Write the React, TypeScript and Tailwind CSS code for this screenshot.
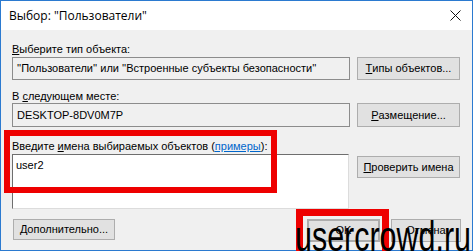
import React from "react";

const font = { fontFamily: '"Liberation Sans", Arial, sans-serif' };

function Btn({ children, className = "" }: { children: React.ReactNode; className?: string }) {
  return (
    <div
      className={
        "flex items-center justify-center bg-[#e1e1e1] border border-[#adadad] text-[11px] text-black leading-none " +
        className
      }
    >
      {children}
    </div>
  );
}

export default function App() {
  return (
    <div className="relative w-[473px] h-[251px] overflow-hidden bg-white" style={font}>
      <div className="w-[473px] h-[251px] border border-[#2b7ad0] flex flex-col bg-[#f0f0f0]">
        {/* title bar */}
        <div className="h-[29px] shrink-0 bg-white flex items-center justify-between pl-[8px] pr-[10px]">
          <span className="text-[12px] text-black" style={{ fontFamily: '"Open Sans", "Noto Sans", sans-serif' }}>
            Выбор: "Пользователи"
          </span>
          <svg width="11" height="11" viewBox="0 0 11 11" className="mr-[1px]">
            <path d="M0.5 0.5 L10.5 10.5 M10.5 0.5 L0.5 10.5" stroke="#111" strokeWidth="1" />
          </svg>
        </div>

        {/* body */}
        <div className="flex flex-col px-[11px] text-[11px] text-black">
          <div className="mt-[12px] h-[14px] leading-[14px]">
            <span className="underline">В</span>ыберите тип объекта:
          </div>
          <div className="flex items-start mt-[1px] h-[23px]">
            <div className="w-[338px] h-[23px] border border-[#8c8c8c] bg-[#f0f0f0] flex items-center pl-[4px]">
              ''Пользователи'' или ''Встроенные субъекты безопасности''
            </div>
            <Btn className="ml-[7px] w-[103px] h-[23px]">
              <span className="underline">Т</span>ипы объектов...
            </Btn>
          </div>

          <div className="mt-[9px] h-[14px] leading-[14px]">
            В <span className="underline">с</span>ледующем месте:
          </div>
          <div className="flex items-start mt-[0px] h-[24px]">
            <div className="w-[338px] h-[24px] border border-[#8c8c8c] bg-[#f0f0f0] flex items-center pl-[4px]">
              DESKTOP-8DV0M7P
            </div>
            <Btn className="ml-[7px] w-[103px] h-[24px]">
              <span className="underline">Р</span>азмещение...
            </Btn>
          </div>

          <div className="mt-[12px] h-[14px] leading-[14px]">
            Введите <span className="underline">и</span>мена выбираемых объектов (
            <span className="text-[#0066cc] underline">примеры</span>):
          </div>
          <div className="flex items-start mt-[1px] h-[55px]">
            <div className="w-[337px] h-[55px] bg-white border-t border-l border-[#6e6e6e] border-r-[#dcdcdc] border-b-[#dcdcdc] border-r border-b pl-[3px] pt-[3px] leading-[14px]">
              user2
            </div>
            <Btn className="ml-[8px] w-[103px] h-[22px] mt-[2px]">
              <span className="underline">П</span>роверить имена
            </Btn>
          </div>

          <div className="flex items-start mt-[10px]">
            <Btn className="ml-[1px] w-[102px] h-[21px]">
              <span className="underline">Д</span>ополнительно...
            </Btn>
            <div className="flex-1" />
            <Btn className="w-[73px] h-[23px] border-2 border-[#0078d7]">OK</Btn>
            <Btn className="ml-[11px] w-[70px] h-[23px]">Отмена</Btn>
          </div>
        </div>
      </div>

      {/* red highlight boxes */}
      <div className="absolute left-[4px] top-[130px] w-[273px] h-[63px] border-[6px] border-[#ee0000]" />
      <div className="absolute left-[296px] top-[209px] w-[93px] h-[60px] border-[7px] border-[#ee0000]" />

      {/* watermark */}
      <div
        className="absolute left-[295px] top-[213px] text-[42px] leading-[48px] text-black origin-left scale-x-[0.725] whitespace-nowrap"
        style={font}
      >
        usercrowd.ru
      </div>
    </div>
  );
}
